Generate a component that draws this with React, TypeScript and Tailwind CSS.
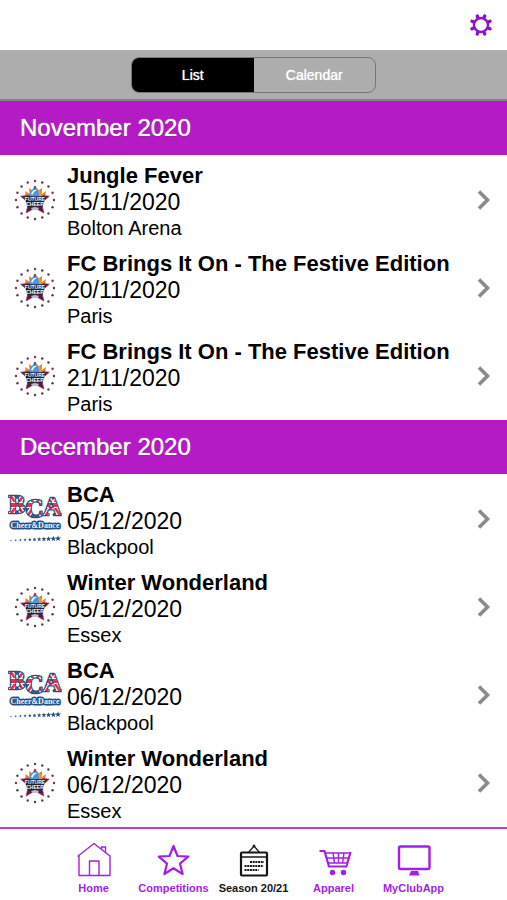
import type { ReactNode } from 'react'

type Club = 'future' | 'bca'

interface Event {
  name: string
  date: string
  place: string
  club: Club
}

interface Month {
  title: string
  events: Event[]
}

const months: Month[] = [
  {
    title: 'November 2020',
    events: [
      { name: 'Jungle Fever', date: '15/11/2020', place: 'Bolton Arena', club: 'future' },
      { name: 'FC Brings It On - The Festive Edition', date: '20/11/2020', place: 'Paris', club: 'future' },
      { name: 'FC Brings It On - The Festive Edition', date: '21/11/2020', place: 'Paris', club: 'future' },
    ],
  },
  {
    title: 'December 2020',
    events: [
      { name: 'BCA', date: '05/12/2020', place: 'Blackpool', club: 'bca' },
      { name: 'Winter Wonderland', date: '05/12/2020', place: 'Essex', club: 'future' },
      { name: 'BCA', date: '06/12/2020', place: 'Blackpool', club: 'bca' },
      { name: 'Winter Wonderland', date: '06/12/2020', place: 'Essex', club: 'future' },
    ],
  },
]

function starPoints(cx: number, cy: number, r: number, inner: number) {
  return Array.from({ length: 10 }, (_, i) => {
    const a = (Math.PI / 5) * i - Math.PI / 2
    const d = i % 2 ? inner : r
    return `${(cx + d * Math.cos(a)).toFixed(2)},${(cy + d * Math.sin(a)).toFixed(2)}`
  }).join(' ')
}

function FutureCheerLogo() {
  return (
    <svg viewBox="0 0 44 44" className="size-11" aria-hidden="true">
      {Array.from({ length: 16 }, (_, i) => {
        const a = (Math.PI / 8) * i
        return (
          <circle
            key={i}
            cx={22 + 19 * Math.sin(a)}
            cy={22 - 19 * Math.cos(a)}
            r="1.200"
            fill={i % 3 ? '#4a3d52' : '#75324f'}
          />
        )
      })}
      <path d="M12 19 12.500 13l4 3-.5-6 4 3 2-5 3 5 4-3v6l4-3-1 6z" fill="#ef7d2d" />
      <polygon points={starPoints(22, 22.8, 15, 7)} fill="#4b2048" stroke="#a8324c" strokeWidth="0.800" />
      <path d="M16.500 18.500c0-6 3.500-8.500 7-8 3 1 4 4 4.500 8z" fill="#3b9be5" />
      <path d="M18 16c1-3 3-5 6-4-3 1-3.500 3-4.500 5z" fill="#e8f3fb" />
      <path d="M25 12c3 0 4.500 3 4.500 6.500l-3.500-1z" fill="#f49535" />
      <path d="M11.500 18.500h21l-1 5h-19z" fill="#211d29" />
      <path d="M13 23h18l-1 5.500H14z" fill="#211d29" />
      <text x="22" y="22.800" fontSize="5" fontWeight="700" textAnchor="middle" fill="#fff">FUTURE</text>
      <text x="22" y="27.800" fontSize="5" fontWeight="700" textAnchor="middle" fill="#fff">CHEER</text>
      <path d="M18 30 22 29l4 1-1.500 2h-5z" fill="#b9bfd0" />
    </svg>
  )
}

function BcaLogo() {
  return (
    <svg viewBox="0 0 54 54" className="size-[54px]" aria-hidden="true">
      <defs>
        <pattern id="flag" width="18" height="26" patternUnits="userSpaceOnUse">
          <rect width="18" height="26" fill="#315d99" />
          <path d="M0 0 18 26M18 0 0 26" stroke="#fff" strokeWidth="5" />
          <path d="M0 0 18 26M18 0 0 26" stroke="#e3344b" strokeWidth="2.600" />
          <path d="M0 13h18" stroke="#fff" strokeWidth="6" />
          <path d="M0 13h18" stroke="#e3344b" strokeWidth="4" />
        </pattern>
      </defs>
      <text
        x="27"
        y="21"
        fontFamily="'Liberation Serif', serif"
        fontWeight="700"
        fontSize="25"
        textAnchor="middle"
        fill="url(#flag)"
        stroke="#29517f"
        strokeWidth="2.400"
        strokeLinejoin="round"
        style={{ paintOrder: 'stroke' }}
      >
        B<tspan dy="4">C</tspan><tspan dy="-2">A</tspan>
      </text>
      <text
        x="27"
        y="36"
        fontFamily="'Liberation Serif', serif"
        fontWeight="700"
        fontSize="8"
        textAnchor="middle"
        fill="#eaf4fb"
        stroke="#24517f"
        strokeWidth="3"
        strokeLinejoin="round"
        style={{ paintOrder: 'stroke' }}
      >
        Cheer&amp;Dance
      </text>
      {Array.from({ length: 11 }, (_, i) => (
        <polygon
          key={i}
          points={starPoints(3 + i * 4.7, 48.5 - i * 0.2, 1 + i * 0.22, 0.45 + i * 0.09)}
          fill="#244f80"
        />
      ))}
    </svg>
  )
}

function GearIcon() {
  return (
    <svg viewBox="0 0 24 24" className="size-6" fill="none" stroke="#8c12c8" aria-hidden="true">
      <circle cx="12" cy="12" r="7" strokeWidth="2.400" />
      {[22.5, 67.5, 112.5, 157.5, 202.5, 247.5, 292.5, 337.5].map((angle) => (
        <path
          key={angle}
          d="M12 4V2.200"
          strokeWidth="3.400"
          strokeLinecap="round"
          transform={`rotate(${angle} 12 12)`}
        />
      ))}
    </svg>
  )
}

function Chevron() {
  return (
    <svg viewBox="0 0 14 22" className="h-[22px] w-3.5 shrink-0" fill="none" stroke="#8b8b8b" strokeWidth="3.600" aria-hidden="true">
      <path d="M2 2.500 10.500 11 2 19.500" />
    </svg>
  )
}

function TabIcon({ children }: { children: ReactNode }) {
  return (
    <svg viewBox="0 0 36 36" className="size-9 overflow-visible" fill="none" stroke="currentColor" aria-hidden="true">
      {children}
    </svg>
  )
}

const tabs = [
  {
    label: 'Home',
    icon: (
      <g strokeWidth="1.400" strokeLinejoin="round">
        <path d="M3 12.500V32.500h31V12.500M1.500 13.500 18 0.500l16.500 13" />
        <path d="M25.500 6V4h4v5.500M13.500 32.500V18h9.500v14.500" />
      </g>
    ),
  },
  {
    label: 'Competitions',
    icon: <polygon points={starPoints(17.5, 18.5, 15.5, 6.8)} strokeWidth="2.200" strokeLinejoin="round" />,
  },
  {
    label: 'Season 20/21',
    icon: (
      <>
        <path d="m12.500 9.500 5.500-6.500 5.500 6.500" strokeWidth="1.200" />
        <circle cx="18" cy="3" r="1" fill="currentColor" />
        <rect x="5" y="9.500" width="26" height="23" rx="1" strokeWidth="2.200" />
        <path d="M5 14h26" strokeWidth="1.500" />
        <path d="M14 19h14M8.500 23h19M8.500 27h14" strokeWidth="2" strokeDasharray="2 0.700" />
      </>
    ),
  },
  {
    label: 'Apparel',
    icon: (
      <>
        <path d="M3.500 8h5l4.500 15.500h18" strokeWidth="2.200" />
        <path d="M9 10h25.500L31 20H12M10.500 15h22.500M17 10l1.500 10M22.500 10v10M28 10l-1.500 10" strokeWidth="1.500" />
        <path d="m34.500 9-4 14.500" strokeWidth="2" />
        <circle cx="16.500" cy="29.500" r="2.700" fill="currentColor" stroke="none" />
        <circle cx="27.500" cy="29.500" r="2.700" fill="currentColor" stroke="none" />
      </>
    ),
  },
  {
    label: 'MyClubApp',
    icon: (
      <>
        <rect x="3" y="3.500" width="30.500" height="22.500" rx="1.500" strokeWidth="2.400" />
        <path d="M15 28h7l1.500 4.500H13z" fill="currentColor" stroke="none" />
      </>
    ),
  },
]

function EventRow({ event }: { event: Event }) {
  return (
    <li>
      <a href="#event" className="flex h-[88px] items-center pt-0.5 pr-4">
        <span className="flex w-[67px] shrink-0 items-center justify-center pl-0.5">
          {event.club === 'bca' ? <BcaLogo /> : <FutureCheerLogo />}
        </span>
        <span className="min-w-0 flex-1 pt-1">
          <span className="block truncate text-[22px] leading-[26px] font-bold">{event.name}</span>
          <span className="block text-[23px] leading-[27px]">{event.date}</span>
          <span className="block text-[20px] leading-[25px]">{event.place}</span>
        </span>
        <Chevron />
      </a>
    </li>
  )
}

export default function App() {
  return (
    <div className="flex min-h-screen flex-col bg-white font-['Liberation_Sans',Arial,sans-serif] text-black">
      <header className="flex h-[50px] items-center justify-end px-3.5">
        <button type="button" aria-label="Settings" className="size-6">
          <GearIcon />
        </button>
      </header>

      <div className="flex h-[51px] items-center justify-center border-b-2 border-[#8c8090] bg-[#adadad]">
        <div className="flex h-9 w-[245px] overflow-hidden rounded-lg border border-[#777]">
          <button type="button" aria-pressed="true" className="flex-1 bg-black pt-0.5 text-[14px] text-white text-shadow-[0_0_1px_#fff]">
            List
          </button>
          <button type="button" aria-pressed="false" className="flex-1 pt-0.5 text-[14px] text-white text-shadow-[0_0_1px_#fff]">
            Calendar
          </button>
        </div>
      </div>

      <main className="flex-1">
        {months.map((month) => (
          <section key={month.title}>
            <h2 className="flex h-[54px] items-center bg-[#b41bc4] px-5 text-[24px] text-white text-shadow-[0_0_1px_#fff,0_1px_1px_rgb(0_0_0/0.3)]">
              {month.title}
            </h2>
            <ul className="pb-px">
              {month.events.map((event) => (
                <EventRow key={`${event.date}-${event.name}`} event={event} />
              ))}
            </ul>
          </section>
        ))}
      </main>

      <nav className="sticky bottom-0 flex h-[73px] justify-center border-t-2 border-[#b440cb] bg-white">
        {tabs.map((tab) => (
          <a
            key={tab.label}
            href="#tab"
            className={`flex w-20 flex-col items-center pt-3.5 ${
              tab.label === 'Season 20/21' ? 'text-[#151515]' : 'text-[#a31ee6]'
            }`}
          >
            <TabIcon>{tab.icon}</TabIcon>
            <span className="text-[11px] leading-[18px] font-bold whitespace-nowrap">{tab.label}</span>
          </a>
        ))}
      </nav>
    </div>
  )
}
